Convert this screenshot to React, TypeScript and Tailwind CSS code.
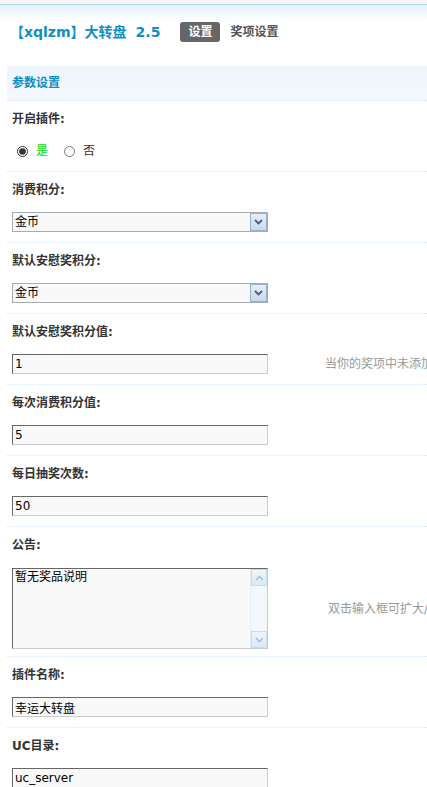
import type { ReactNode } from "react";

const font = { fontFamily: '"DejaVu Sans", "Noto Sans CJK SC", sans-serif' };

function Row({ label, children, hint }: { label: string; children: ReactNode; hint?: string }) {
  return (
    <div className="border-b border-dotted border-[#dce9f4] pb-[10px]">
      <div className="h-[36px] flex items-center pl-[5px] text-[12px] font-bold text-[#333]">{label}</div>
      <div className="mt-[4px] flex items-center pl-[5px]">
        {children}
        {hint && (
          <span className="ml-[57px] whitespace-nowrap text-[12px] text-[#999]">{hint}</span>
        )}
      </div>
    </div>
  );
}

function TextBox({ value }: { value: string }) {
  return (
    <input
      defaultValue={value}
      className="w-[256px] h-[20px] shrink-0 border border-t-[#666] border-l-[#666] border-b-[#ccc] border-r-[#ccc] bg-[#f9f9f9] px-[2px] text-[12px] text-black outline-none"
    />
  );
}

function SelectBox() {
  return (
    <div className="w-[256px] h-[20px] shrink-0 flex border border-[#a5acb2] bg-[#f9f9f9]">
      <select className="flex-1 appearance-none bg-transparent px-[2px] text-[12px] text-black outline-none">
        <option>金币</option>
      </select>
      <div className="w-[17px] h-[18px] flex items-center justify-center border border-[#98b1cc] bg-gradient-to-b from-[#e6eef8] to-[#c9d9ee]">
        <svg width="9" height="6" viewBox="0 0 9 6">
          <path d="M1 1 L4.5 4.5 L8 1" fill="none" stroke="#4b5f79" strokeWidth="1.8" />
        </svg>
      </div>
    </div>
  );
}

function ScrollButton({ up }: { up?: boolean }) {
  return (
    <div className="h-[17px] flex items-center justify-center border border-[#c9dbef] bg-gradient-to-b from-[#f0f5fc] to-[#dce8f6]">
      <svg width="9" height="6" viewBox="0 0 9 6">
        <path d={up ? "M1 5 L4.5 1.5 L8 5" : "M1 1 L4.5 4.5 L8 1"} fill="none" stroke="#a9c1dc" strokeWidth="1.6" />
      </svg>
    </div>
  );
}

export default function App() {
  return (
    <div className="w-full min-h-screen bg-white overflow-hidden" style={font}>
      <div className="h-[4px] bg-[#f3f5f6]" />
      <div className="border-t border-[#b6d5e2] bg-gradient-to-b from-[#e5f1f7] to-white to-[30%]">
        <div className="h-[54px] flex items-center pl-[10px]">
          <span className="text-[14px] font-bold text-[#0d8fc6]">【xqlzm】大转盘</span>
          <span className="ml-[9px] text-[14px] font-bold text-[#0d8fc6]">2.5</span>
          <span className="ml-[20px] h-[20px] px-[8px] flex items-center rounded-[3px] bg-[#666] text-[12px] font-bold text-white">设置</span>
          <span className="ml-[10px] text-[12px] font-bold text-[#555]">奖项设置</span>
        </div>
      </div>

      <div className="mt-[7px] pl-[7px]">
        <div className="h-[35px] flex items-center pl-[5px] bg-gradient-to-b from-[#edf5fd] to-[#f3f8fd] border-b border-dotted border-[#dce9f4] text-[12px] font-bold text-[#0b8ec2]">
          参数设置
        </div>

        <Row label="开启插件:">
          <div className="h-[20px] flex items-center text-[12px]">
            <input type="radio" name="on" defaultChecked className="ml-[5px] w-[11px] h-[11px] accent-[#333]" />
            <span className="ml-[8px] text-[#00dd00]">是</span>
            <input type="radio" name="on" className="ml-[16px] w-[11px] h-[11px]" />
            <span className="ml-[8px] text-[#333]">否</span>
          </div>
        </Row>

        <Row label="消费积分:">
          <SelectBox />
        </Row>

        <Row label="默认安慰奖积分:">
          <SelectBox />
        </Row>

        <Row label="默认安慰奖积分值:" hint="当你的奖项中未添加奖品时，默认给予的安慰奖积分">
          <TextBox value="1" />
        </Row>

        <Row label="每次消费积分值:">
          <TextBox value="5" />
        </Row>

        <Row label="每日抽奖次数:">
          <TextBox value="50" />
        </Row>

        <div className="border-b border-dotted border-[#dce9f4] pb-[7px]">
          <div className="h-[36px] flex items-center pl-[5px] text-[12px] font-bold text-[#333]">公告:</div>
          <div className="mt-[5px] flex items-center pl-[5px]">
            <div className="w-[256px] h-[81px] shrink-0 flex border border-t-[#666] border-l-[#666] border-b-[#ccc] border-r-[#ccc] bg-[#f9f9f9]">
              <textarea
                defaultValue="暂无奖品说明"
                className="flex-1 resize-none overflow-hidden bg-transparent px-[2px] text-[12px] leading-[16px] text-black outline-none"
              />
              <div className="w-[17px] flex flex-col bg-[#f4f8fd] border-l border-[#e3ecf7]">
                <ScrollButton up />
                <div className="flex-1" />
                <ScrollButton />
              </div>
            </div>
            <span className="ml-[60px] whitespace-nowrap text-[12px] text-[#999]">双击输入框可扩大/缩小</span>
          </div>
        </div>

        <Row label="插件名称:">
          <TextBox value="幸运大转盘" />
        </Row>

        <Row label="UC目录:">
          <TextBox value="uc_server" />
        </Row>
      </div>
    </div>
  );
}
